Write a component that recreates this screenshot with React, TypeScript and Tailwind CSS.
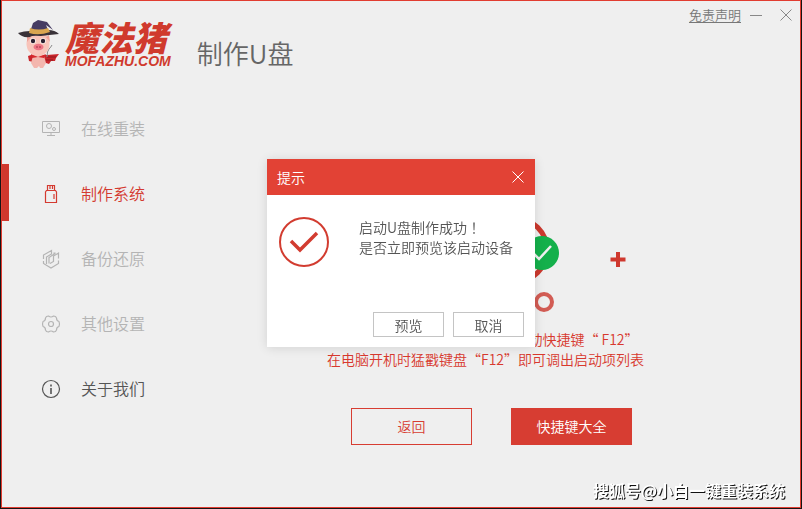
import type { ReactNode } from 'react';

type NavItem = {
  label: string;
  icon: ReactNode;
  active?: boolean;
  className: string;
};

function MonitorIcon() {
  return (
    <svg width="20" height="20" viewBox="0 0 20 20" fill="none" stroke="currentColor">
      <path d="M1.5 2.5h17v11h-17zM10 13.5v3M6 16.5h8" />
      <circle cx="8" cy="7" r="2.5" />
      <circle cx="13" cy="10" r="1.5" />
    </svg>
  );
}

function UsbIcon() {
  return (
    <svg width="20" height="20" viewBox="0 0 20 20" fill="none" stroke="currentColor" strokeWidth="1.2">
      <path d="M6.5 7V1.5h7V7M9 2v3M11.5 2v3" />
      <path d="M5.5 6.5h9l1 1.5v10.5h-11V8zM13 10v5" />
    </svg>
  );
}

function BackupIcon() {
  return (
    <svg width="20" height="20" viewBox="0 0 20 20" fill="none" stroke="currentColor" strokeWidth="1.2">
      <path d="M5.5 15V8l5-3V1.5L2.500 6v4M2.500 12v2.500l7.500 4.500 7.500-4.500V11.500" />
      <path d="M8 14.500V8.500l6-4v-1M13 3.500v2M17.500 9.500V4l-5 3v5.500l-3.500 2" />
    </svg>
  );
}

function GearIcon() {
  return (
    <svg width="20" height="20" viewBox="0 0 20 20" fill="none" stroke="currentColor" strokeWidth="1.2" strokeLinejoin="round">
      <path d="M5.500 2.500l2-.5q2.500 2 5 0l2 .5 1 1.500q0 3 2.500 3.500l.5 2.500-.5 2.500q-2.500.5-2.500 3.500l-1 1.500-2 .5q-2.500-2-5 0l-2-.5-1-1.500q0-3-2.500-3.500L1.500 10 2 7.500Q4.500 7 4.500 4z" />
      <circle cx="10" cy="10" r="2.500" />
    </svg>
  );
}

function InfoIcon() {
  return (
    <svg width="20" height="20" viewBox="0 0 20 20" fill="none" stroke="currentColor">
      <circle cx="10" cy="10" r="8.500" strokeWidth="1.200" />
      <path d="M10 9v6M10 5.500v2" strokeWidth="1.600" />
    </svg>
  );
}

function CloseIcon({ size }: { size: number }) {
  return (
    <svg width={size} height={size} viewBox="0 0 12 12" fill="none" stroke="currentColor">
      <path d="M.5.5l11 11M11.500.5l-11 11" />
    </svg>
  );
}

function PigLogo() {
  return (
    <svg width="44" height="50" viewBox="0 0 44 50" aria-hidden="true">
      {/* Cape */}
      <path d="M14 36h16l12-1-3 4-1 3-4 0-2 3-6-2H16l-4-1-1-5z" fill="#c9252b" />
      <path d="M30 38h9M29 41h7" stroke="#8e1a20" strokeWidth="1" />
      {/* Body */}
      <path d="M16 37q5-3 11 0l2 7-3 5h-3l-1-2-2 2h-3l-3-5z" fill="#f3b6ae" />
      <path d="M14 35l7 3 8-3-2 4-6-1-6 1z" fill="#d7282d" />
      <path d="M30 38q0-6 2-8t3-4" fill="none" stroke="#8b8b8b" strokeWidth="1" />
      {/* Head */}
      <ellipse cx="21" cy="25" rx="11.500" ry="12" fill="#f8c4ba" />
      <path d="M10 16l0 7 4-5zM32 16l1 7-4-5z" fill="#eea198" />
      <circle cx="16" cy="22" r="2.800" fill="#fff" />
      <circle cx="26" cy="22" r="2.800" fill="#fff" />
      <circle cx="16" cy="22" r="2.200" fill="#2b2030" />
      <circle cx="26" cy="22" r="2.200" fill="#2b2030" />
      <ellipse cx="21.500" cy="28" rx="5" ry="3.200" fill="#ee7484" />
      <path d="M20 27v2M23 27v2" stroke="#9c3346" />
      {/* Hat */}
      <path d="M1 14q6-2 12-2l18-1q7 0 11 4-10 1-18 2-9-1-11 1-8 1-12-4z" fill="#393238" />
      <path d="M13 13l3-9 5-3 9 2 6 8-7-5 3 7z" fill="#463c62" />
      <path d="M13 9q9 3 18 0l2 4q-11 4-21 1z" fill="#d9a650" />
    </svg>
  );
}

const navItems: NavItem[] = [
  { label: '在线重装', icon: <MonitorIcon />, className: 'text-[#b4b4b4]' },
  { label: '制作系统', icon: <UsbIcon />, active: true, className: 'text-[#d43a30]' },
  { label: '备份还原', icon: <BackupIcon />, className: 'text-[#b4b4b4]' },
  { label: '其他设置', icon: <GearIcon />, className: 'text-[#b4b4b4]' },
  { label: '关于我们', icon: <InfoIcon />, className: 'text-[#555]' },
];

function Header() {
  return (
    <header className="flex items-start justify-between pb-7">
      <div className="flex items-start pt-[18px] pl-[15px]">
        <PigLogo />
        <div className="ml-1 italic text-[#d03a2d]">
          <div className="text-[34px] leading-9 font-black">魔法猪</div>
          <div className="font-['Liberation_Sans',sans-serif] text-[14px] leading-3 font-bold">MOFAZHU.COM</div>
        </div>
        <h1 className="ml-[26px] pt-4 text-[26px] leading-9 text-[#666]">制作U盘</h1>
      </div>
      <div className="flex items-center pt-1 pr-2 text-[#888]">
        <a href="#disclaimer" className="text-[13px] leading-5 text-[#777] underline underline-offset-2">
          免责声明
        </a>
        <button type="button" aria-label="最小化" className="ml-[9px] flex h-5 w-3 items-center">
          <span className="h-px w-3 bg-[#888]" />
        </button>
        <button type="button" aria-label="关闭" className="ml-[18px]">
          <CloseIcon size={12} />
        </button>
      </div>
    </header>
  );
}

function Sidebar() {
  return (
    <nav className="flex w-[181px] shrink-0 flex-col gap-2">
      {navItems.map((item) => (
        <a
          key={item.label}
          href="#"
          className={`flex h-[57px] items-center border-l-[7px] pl-8 ${item.active ? 'border-[#cf382e]' : 'border-transparent'} ${item.className}`}
        >
          <span className="pt-[3px]">{item.icon}</span>
          <span className="ml-5 text-[16px] leading-6">{item.label}</span>
        </a>
      ))}
    </nav>
  );
}

function BootKeyPanel() {
  return (
    <main className="flex flex-1 flex-col items-center pt-[107px]">
      <svg width="273" height="123" viewBox="0 0 273 123" fill="none" aria-hidden="true">
        <circle cx="160" cy="44" r="32" stroke="#cb392e" strokeWidth="5" />
        <circle cx="187" cy="47" r="17" fill="#14b04b" />
        <path d="M178 47l6 6 12-13" stroke="#f0f0f0" strokeWidth="2.500" />
        <circle cx="189" cy="96" r="8" stroke="#d25c54" strokeWidth="4" />
        <path d="M263 46v15M255.500 53.500h15" stroke="#cf382e" strokeWidth="4" />
      </svg>
      <p className="pr-3 text-center text-[14px] leading-5 text-[#d8392e]">
        检测到您当前这台电脑主板的启动快捷键“ F12”
        <br />
        在电脑开机时猛戳键盘“F12”即可调出启动项列表
      </p>
      <div className="mt-[39px] flex gap-[39px] text-[14px]">
        <button type="button" className="h-[37px] w-[121px] border border-current text-[#d73d32]">
          返回
        </button>
        <button type="button" className="h-[37px] w-[121px] bg-[#d73d32] text-white">
          快捷键大全
        </button>
      </div>
    </main>
  );
}

function SuccessDialog() {
  return (
    <div className="fixed inset-0 flex items-center justify-center pb-[3px]">
      <div role="dialog" aria-labelledby="dialog-title" className="w-[268px] bg-white shadow-[0_1px_10px_rgba(0,0,0,0.12)]">
        <div className="flex h-9 items-center justify-between bg-[#e24235] pr-[11px] pl-[10px] text-white">
          <h2 id="dialog-title" className="text-[14px]">提示</h2>
          <button type="button" aria-label="关闭">
            <CloseIcon size={12} />
          </button>
        </div>
        <div className="flex px-3 pt-[22px]">
          <svg width="50" height="50" viewBox="0 0 50 50" fill="none" stroke="#d23c30" className="shrink-0">
            <circle cx="25" cy="25" r="24" strokeWidth="2" />
            <path d="M12 24l9 9 17-17" strokeWidth="3.500" />
          </svg>
          <p className="ml-[30px] text-[14px] leading-5 text-[#555]">
            启动U盘制作成功
            <span lang="zh-TW" className="font-['Noto_Sans_CJK_TC',sans-serif]">！</span>
            <br />
            是否立即预览该启动设备
          </p>
        </div>
        <div className="flex justify-end gap-[9px] px-[11px] pt-[45px] pb-[10px] text-[14px] leading-none text-[#555]">
          <button type="button" className="h-[25px] w-[71px] border border-[#c4c4c4]">
            预览
          </button>
          <button type="button" className="h-[25px] w-[71px] border border-[#c4c4c4]">
            取消
          </button>
        </div>
      </div>
    </div>
  );
}

export default function App() {
  return (
    <div
      lang="zh-CN"
      className="relative flex min-h-screen border-r border-b border-l border-[#151515] font-['Noto_Sans_CJK_SC',sans-serif] font-[350]"
    >
      <div className="flex flex-1 flex-col border border-[#e13c30] bg-[#efefef]">
        <Header />
        <div className="flex flex-1">
          <Sidebar />
          <BootKeyPanel />
        </div>
      </div>
      <SuccessDialog />
      <div className="absolute right-4 bottom-1.5 text-[16px] leading-6 font-bold text-white [text-shadow:1px_1px_0_#111]">
        搜狐号@小白一键重装系统
      </div>
    </div>
  );
}
